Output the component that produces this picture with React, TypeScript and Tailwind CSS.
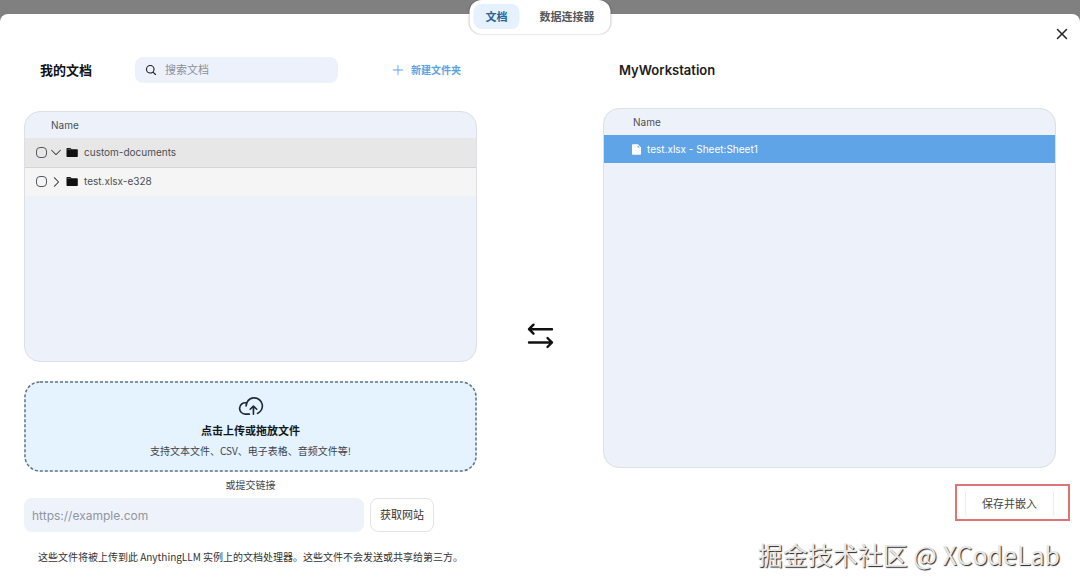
import { useState } from 'react';
import {
  PiCaretDown,
  PiCaretRight,
  PiCloudArrowUp,
  PiFileFill,
  PiMagnifyingGlassBold,
  PiPlus,
  PiXBold,
} from 'react-icons/pi';

const folders = [
  { name: 'custom-documents', expanded: true },
  { name: 'test.xlsx-e328', expanded: false },
];

const workspaceFiles = ['test.xlsx - Sheet:Sheet1'];

function FolderIcon() {
  return (
    <svg className="h-[11px] w-3 shrink-0 text-[#111111]" viewBox="0 0 12 11" fill="currentColor">
      <path d="M0.5 1.8A0.8 0.8 0 0 1 1.3 1h3l1.4 1.3H11a0.8 0.8 0 0 1 0.8 0.8V9.2a0.8 0.8 0 0 1-0.8 0.8H1.3a0.8 0.8 0 0 1-0.8-0.8z" />
      <path d="M1.3 2.3h3.6" stroke="#888888" strokeWidth="0.6" />
    </svg>
  );
}

function TransferIcon() {
  return (
    <svg
      className="h-7 w-7 text-[#111111]"
      viewBox="0 0 28 28"
      fill="none"
      stroke="currentColor"
      strokeWidth="2.4"
      strokeLinecap="round"
      strokeLinejoin="round"
    >
      <path d="M26 7.2H3M7.5 2.7L3 7.2L7.5 11.7" />
      <path d="M3 20.5H26M21.5 16L26 20.5L21.5 25" />
    </svg>
  );
}

function Tabs() {
  const [tab, setTab] = useState('documents');
  const active = 'bg-[#e5f1fe] text-[#2b6394]';
  const inactive = 'text-[#55585c]';

  return (
    <div className="absolute top-0 left-1/2 z-10 flex -translate-x-1/2 rounded-xl bg-white p-1 pb-[5px] whitespace-nowrap shadow-[0_0_2px_rgba(0,0,0,0.3)]">
      <button
        onClick={() => setTab('documents')}
        className={`h-[25px] rounded-lg px-3 pt-[2px] text-[11px] font-bold ${tab === 'documents' ? active : inactive}`}
      >
        文档
      </button>
      <button
        onClick={() => setTab('connectors')}
        className={`ml-2 h-[25px] rounded-lg px-3 pt-[2px] text-[11px] font-bold ${tab === 'connectors' ? active : inactive}`}
      >
        数据连接器
      </button>
    </div>
  );
}

function MyDocuments() {
  return (
    <section className="flex flex-col">
      <div className="flex h-[26px] items-center pr-4 pl-4">
        <h2 className="w-[95px] pt-[2px] text-[13px] font-bold text-[#111111]">我的文档</h2>
        <label className="flex h-[26px] w-[203px] items-center gap-2 rounded-lg bg-[#edf1fb] px-[10px]">
          <PiMagnifyingGlassBold className="h-3 w-3 shrink-0 text-[#222222]" />
          <input
            type="search"
            aria-label="搜索文档"
            placeholder="搜索文档"
            className="w-full min-w-0 bg-transparent text-[11px] outline-none placeholder:text-[#8b9099]"
          />
        </label>
        <button className="ml-auto flex items-center gap-[6px] text-[10px] font-bold whitespace-nowrap text-[#5ba2e4]">
          <PiPlus className="h-[14px] w-[14px]" />
          新建文件夹
        </button>
      </div>

      <div className="mt-7 h-[251px] overflow-hidden rounded-2xl border border-[#dcdfe6] bg-[#edf1fa]">
        <table className="w-full text-left text-[10px] text-[#4b4e53]">
          <thead>
            <tr className="h-[26px]">
              <th className="pl-[26px] font-normal">Name</th>
            </tr>
          </thead>
          <tbody>
            {folders.map((folder) => (
              <tr
                key={folder.name}
                className={`h-[29px] ${folder.expanded ? 'border-b border-[#d4d5d7] bg-[#e7e7e7]' : 'bg-[#f5f5f5]'}`}
              >
                <td className="pl-[11px]">
                  <div className="flex items-center">
                    <input
                      type="checkbox"
                      aria-label={folder.name}
                      className="h-[11px] w-[11px] appearance-none rounded-[4px] border border-[#55585c] checked:bg-[#55585c]"
                    />
                    <button aria-label="展开" className="ml-[2px] text-[#333333]">
                      {folder.expanded ? (
                        <PiCaretDown className="h-[14px] w-[14px]" />
                      ) : (
                        <PiCaretRight className="h-[14px] w-[14px]" />
                      )}
                    </button>
                    <span className="ml-[3px] flex items-center gap-[6px]">
                      <FolderIcon />
                      {folder.name}
                    </span>
                  </div>
                </td>
              </tr>
            ))}
          </tbody>
        </table>
      </div>

      {/* 上传区域 */}
      <button className="relative mt-[19px] flex h-[91px] flex-col items-center rounded-2xl bg-[#e5f2ff] pt-3">
        <svg className="absolute inset-0 h-full w-full overflow-visible p-px" aria-hidden="true">
          <rect
            width="100%"
            height="100%"
            rx="15"
            fill="none"
            stroke="#64727f"
            strokeWidth="1.5"
            strokeDasharray="3 2"
          />
        </svg>
        <PiCloudArrowUp className="h-[26px] w-[26px] text-[#1f2933]" />
        <span className="mt-1 text-[11px] leading-4 font-bold text-[#111820]">点击上传或拖放文件</span>
        <span className="mt-1 font-['Noto_Sans_CJK_SC',sans-serif] text-[10px] leading-4 text-[#3a4550]">
          支持文本文件、CSV、电子表格、音频文件等!
        </span>
      </button>

      <p className="mt-[5px] text-center text-[10px] leading-4 text-[#44474b]">或提交链接</p>

      <form className="mt-[5px] flex gap-[6px] pr-[43px]" onSubmit={(e) => e.preventDefault()}>
        <input
          type="url"
          aria-label="链接"
          placeholder="https://example.com"
          className="h-[34px] min-w-0 flex-1 rounded-lg bg-[#eef2fb] px-2 text-xs outline-none placeholder:text-[#9096a0]"
        />
        <button
          type="submit"
          className="h-[34px] w-16 rounded-lg border border-[#e2e3e5] bg-white text-[11px] text-[#333333]"
        >
          获取网站
        </button>
      </form>

      <p className="mt-[17px] text-center font-['Noto_Sans_CJK_SC',sans-serif] text-[10px] leading-4 whitespace-nowrap text-[#333333]">
        这些文件将被上传到此 AnythingLLM 实例上的文档处理器。这些文件不会发送或共享给第三方。
      </p>
    </section>
  );
}

function Workspace() {
  return (
    <section className="flex flex-col">
      <h2 className="flex h-[26px] items-center pt-[2px] pl-4 text-[13px] font-semibold text-[#1c1c1c]">
        MyWorkstation
      </h2>

      <div className="mt-[25px] h-[360px] overflow-hidden rounded-2xl border border-[#dcdfe6] bg-[#edf1fa]">
        <table className="w-full text-left text-[10px]">
          <thead>
            <tr className="h-[26px] text-[#4b4e53]">
              <th className="pl-[29px] font-normal">Name</th>
            </tr>
          </thead>
          <tbody>
            {workspaceFiles.map((file) => (
              <tr key={file} className="h-7 bg-[#5fa4e6] text-white">
                <td className="pl-[26px]">
                  <div className="flex items-center gap-1">
                    <PiFileFill className="h-[13px] w-[13px] shrink-0" />
                    {file}
                  </div>
                </td>
              </tr>
            ))}
          </tbody>
        </table>
      </div>

      <div className="mt-4 -mr-[14px] self-end border-2 border-[#df7474] pt-1 pr-[14px] pb-[2px] pl-2">
        <button className="h-[27px] w-[89px] rounded-sm border-x border-[#ececee] bg-white pt-px text-[11px] text-[#444444]">
          保存并嵌入
        </button>
      </div>
    </section>
  );
}

export default function App() {
  return (
    <div className="relative flex min-h-screen flex-col overflow-hidden bg-[#808080] pt-[14px] font-['Inter','Noto_Sans_CJK_SC',sans-serif]">
      <Tabs />

      <main className="relative flex-1 rounded-t-lg bg-white px-6 pt-[43px] pb-4">
        <button aria-label="关闭" className="absolute top-3 right-[10px] text-[#222222]">
          <PiXBold className="h-4 w-4" />
        </button>

        <div className="grid grid-cols-[minmax(0,1fr)_126px_minmax(0,1fr)]">
          <MyDocuments />
          <div className="flex justify-center pt-[265px]">
            <TransferIcon />
          </div>
          <Workspace />
        </div>
      </main>

      <div className="pointer-events-none absolute right-5 bottom-[14px] font-['Noto_Sans_CJK_SC',sans-serif] text-[25px] leading-10 whitespace-nowrap text-[#e8e8e8] [text-shadow:1px_1px_1px_#222222]">
        掘金技术社区 @ XCodeLab
      </div>
    </div>
  );
}
